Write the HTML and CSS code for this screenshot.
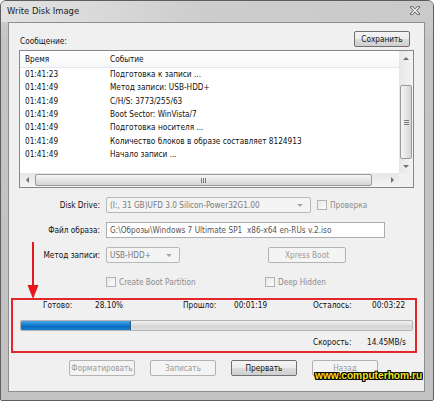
FILE: index.html
```html
<!DOCTYPE html>
<html>
<head>
<meta charset="utf-8">
<title>Write Disk Image</title>
<link rel="stylesheet" href="styles.css">
</head>
<body>
<div class="window">
  <div class="titlebar">
    <span class="title">Write Disk Image</span>
    <svg class="close" width="10" height="9" viewBox="0 0 10 9"><path d="M1.5 1 L8.5 8 M8.5 1 L1.5 8" stroke="#6a6a6a" stroke-width="3" stroke-linecap="round"/><path d="M1.5 1 L8.5 8 M8.5 1 L1.5 8" stroke="#f4f4f4" stroke-width="1.3"/></svg>
  </div>
  <div class="client">
    <div class="msgbar">
      <span class="msg-label">Сообщение:</span>
      <button class="btn save">Сохранить</button>
    </div>
    <div class="list">
      <div class="list-content">
        <div class="list-head"><span class="c1">Время</span><span class="c2">Событие</span></div>
        <div class="row"><span class="c1">01:41:23</span><span class="c2">Подготовка к записи ...</span></div>
        <div class="row"><span class="c1">01:41:49</span><span class="c2">Метод записи: USB-HDD+</span></div>
        <div class="row"><span class="c1">01:41:49</span><span class="c2">C/H/S: 3773/255/63</span></div>
        <div class="row"><span class="c1">01:41:49</span><span class="c2">Boot Sector: WinVista/7</span></div>
        <div class="row"><span class="c1">01:41:49</span><span class="c2">Подготовка носителя ...</span></div>
        <div class="row"><span class="c1">01:41:49</span><span class="c2">Количество блоков в образе составляет 8124913</span></div>
        <div class="row"><span class="c1">01:41:49</span><span class="c2">Начало записи ...</span></div>
      </div>
      <div class="vscroll">
        <div class="sb-arrow"><span class="tri up"></span></div>
        <div class="vtrack"><div class="vthumb"><span class="vgrip"></span></div></div>
        <div class="sb-arrow"><span class="tri down"></span></div>
      </div>
      <div class="hscroll">
        <div class="sb-arrow"><span class="tri left"></span></div>
        <div class="htrack"><div class="hthumb"><span class="hgrip"></span></div></div>
        <div class="sb-arrow"><span class="tri right"></span></div>
      </div>
      <div class="corner"></div>
    </div>

    <div class="form">
      <div class="frow">
        <span class="flabel">Disk Drive:</span>
        <div class="select drive"><span class="sel-text">(I:, 31 GB)UFD 3.0 Silicon-Power32G1.00</span><span class="tri down light"></span></div>
        <span class="check"></span><span class="dis">Проверка</span>
      </div>
      <div class="frow">
        <span class="flabel">Файл образа:</span>
        <div class="input">G:\Оброзы\Windows 7 Ultimate SP1&nbsp; x86-x64 en-RUs v.2.iso</div>
      </div>
      <div class="frow">
        <span class="flabel">Метод записи:</span>
        <div class="select method"><span class="sel-text">USB-HDD+</span><span class="tri down light"></span></div>
        <button class="btn disabled xpress">Xpress Boot</button>
      </div>
      <div class="frow checks">
        <span class="flabel"></span>
        <span class="check"></span><span class="dis cb-text">Create Boot Partition</span>
        <span class="check deep"></span><span class="dis">Deep Hidden</span>
      </div>
    </div>

    <div class="statusbox">
      <div class="srow">
        <span class="s-ready">Готово:</span>
        <span class="s-pct">28.10%</span>
        <span class="s-passed">Прошло:</span>
        <span class="s-time">00:01:19</span>
        <span class="s-left">Осталось:</span>
        <span>00:03:22</span>
      </div>
      <div class="progress"><div class="fill" style="width:28.1%"></div></div>
      <div class="srow speed">
        <span class="s-speed">Скорость:</span>
        <span>14.45MB/s</span>
      </div>
    </div>

    <div class="buttons">
      <button class="btn disabled">Форматировать</button>
      <button class="btn disabled">Записать</button>
      <button class="btn">Прервать</button>
      <button class="btn disabled back">Назад</button>
    </div>
  </div>

  <svg class="arrow" width="12" height="58" viewBox="0 0 12 58"><path d="M6 0 V46" stroke="#e8161e" stroke-width="2"/><path d="M0.5 43 L11.5 43 L6 57 Z" fill="#e8161e"/></svg>
  <div class="watermark">www.computerhom.ru</div>
</div>
</body>
</html>
```

FILE: styles.css
```css
html, body {
  margin: 0;
  padding: 0;
  background: #ffffff;
}

body {
  font-family: "DejaVu Sans Condensed", "DejaVu Sans", sans-serif;
  font-stretch: condensed;
  font-size: 8.2px;
  color: #111;
}

.window {
  position: relative;
  width: 434px;
  height: 401px;
  box-sizing: border-box;
  border: 1px solid #5e5e5e;
  border-radius: 6px 6px 2px 2px;
  background: linear-gradient(to bottom, #d2d2d2, #c4c4c4 40px, #c2c2c2);
  padding: 0 8px 8px 7px;
  display: flex;
  flex-direction: column;
  overflow: hidden;
}

.titlebar {
  height: 21px;
  flex: none;
  display: flex;
  align-items: center;
  justify-content: space-between;
  padding: 0 13px 3px 6px;
  box-sizing: border-box;
  margin: 0 -8px 0 -7px;
  background: linear-gradient(to right, #e2e2e2 0, #dadada 90px, #cdcdcd 200px, #cacaca);
}

.title {
  font-size: 9.4px;
  color: #1a1a1a;
}

.client {
  flex: 1;
  background: #f0f0f0;
  border: 1px solid #8e8e8e;
  display: flex;
  flex-direction: column;
}

.msgbar {
  display: flex;
  justify-content: space-between;
  align-items: flex-end;
  margin: 8px 14px 0 11px;
  height: 16px;
}

.msg-label {
  line-height: 11px;
}

.btn {
  font: inherit;
  font-stretch: condensed;
  color: #111;
  height: 15px;
  padding: 0;
  box-sizing: border-box;
  border: 1px solid #707070;
  border-radius: 2px;
  background: linear-gradient(to bottom, #f4f4f4 0, #ebebeb 50%, #dcdcdc 51%, #cfcfcf 100%);
  line-height: 12px;
  text-align: center;
}

.btn.save {
  width: 56px;
  height: 16px;
}

.btn.disabled {
  color: #9a9a9a;
  border-color: #b3b3b3;
  background: #f4f4f4;
}

/* List view */
.list {
  margin: 3px 10px 0 10px;
  height: 138px;
  box-sizing: border-box;
  border: 1px solid #828790;
  background: #fff;
  display: grid;
  grid-template-columns: 1fr 14px;
  grid-template-rows: 1fr 14px;
}

.list-content {
  overflow: hidden;
}

.list-head {
  height: 17px;
  box-sizing: border-box;
  display: flex;
  align-items: center;
  border-bottom: 1px solid #e4e7ea;
  background: linear-gradient(to bottom, #ffffff, #f7f8f9);
}

.row {
  display: flex;
  height: 13.33px;
  line-height: 13.33px;
  white-space: nowrap;
}

.c1 {
  width: 85px;
  padding-left: 5px;
  box-sizing: border-box;
  flex: none;
}

.c2 {
  padding-left: 5px;
}

.vscroll {
  display: flex;
  flex-direction: column;
  background: linear-gradient(to right, #e6e6e6, #f4f4f4);
}

.hscroll {
  display: flex;
  background: linear-gradient(to bottom, #e6e6e6, #f4f4f4);
}

.corner {
  background: #f0f0f0;
}

.sb-arrow {
  width: 14px;
  height: 14px;
  flex: none;
  display: flex;
  align-items: center;
  justify-content: center;
}

.vtrack {
  flex: 1;
  display: flex;
  flex-direction: column;
}

.vthumb {
  margin: 20px 0 0 1px;
  width: 12px;
  height: 74px;
  box-sizing: border-box;
  border: 1px solid #9a9a9a;
  border-radius: 2px;
  background: linear-gradient(to right, #f5f5f5, #e6e6e6 50%, #d4d4d4);
  display: flex;
  align-items: center;
  justify-content: center;
}

.vgrip {
  width: 5px;
  height: 5px;
  background: repeating-linear-gradient(to bottom, #7a7a7a 0, #7a7a7a 1px, transparent 1px, transparent 2px);
}

.htrack {
  flex: 1;
  display: flex;
}

.hthumb {
  margin: 1px 0 0 1px;
  width: 337px;
  height: 12px;
  box-sizing: border-box;
  border: 1px solid #9a9a9a;
  border-radius: 2px;
  background: linear-gradient(to bottom, #f5f5f5, #e6e6e6 50%, #d4d4d4);
  display: flex;
  align-items: center;
  justify-content: center;
}

.hgrip {
  width: 5px;
  height: 5px;
  background: repeating-linear-gradient(to right, #7a7a7a 0, #7a7a7a 1px, transparent 1px, transparent 2px);
}

.tri {
  width: 0;
  height: 0;
  border-style: solid;
  border-color: transparent;
}

.tri.up {
  border-width: 0 3px 3px 3px;
  border-bottom-color: #707070;
}

.tri.down {
  border-width: 3px 3px 0 3px;
  border-top-color: #707070;
}

.tri.left {
  border-width: 3px 3px 3px 0;
  border-right-color: #707070;
}

.tri.right {
  border-width: 3px 0 3px 3px;
  border-left-color: #707070;
}

.tri.down.light {
  border-top-color: #a8a8a8;
}

/* Form */
.form {
  margin-top: 9px;
  display: flex;
  flex-direction: column;
  gap: 9px;
}

.frow {
  display: flex;
  align-items: center;
  height: 16px;
}

.frow.checks {
  margin-top: 3px;
  height: 14px;
}

.flabel {
  width: 91px;
  margin-right: 6px;
  text-align: right;
  flex: none;
}

.select {
  height: 16px;
  box-sizing: border-box;
  border: 1px solid #b5b9bc;
  border-radius: 2px;
  background: #f4f4f4;
  display: flex;
  align-items: center;
  justify-content: space-between;
  padding: 0 7px 0 3px;
  color: #7a7a7a;
  white-space: nowrap;
  overflow: hidden;
}

.select.drive {
  width: 205px;
}

.select.method {
  width: 74px;
}

.input {
  width: 279px;
  height: 16px;
  box-sizing: border-box;
  border: 1px solid #abadb3;
  background: #fff;
  color: #555;
  padding-left: 3px;
  line-height: 14px;
  white-space: nowrap;
  overflow: hidden;
}

.btn.xpress {
  width: 78px;
  height: 16px;
  margin-left: 88px;
}

.check {
  width: 10px;
  height: 10px;
  box-sizing: border-box;
  border: 1px solid #b3b3b3;
  background: linear-gradient(135deg, #e8e8e8, #fbfbfb);
  flex: none;
  margin-left: 6px;
  margin-right: 3px;
}

.frow.checks .check {
  margin-left: 0;
}

.frow.checks .check.deep {
  margin-left: 58px;
}

.dis {
  color: #8c8c8c;
}

.cb-text {
  width: 88px;
}

/* Status box */
.statusbox {
  margin: 9px 7px 0 2px;
  height: 55px;
  box-sizing: border-box;
  border: 2px solid #e3262c;
}

.srow {
  display: flex;
  line-height: 11px;
  height: 11px;
  padding-left: 30px;
  white-space: nowrap;
}

.s-ready { width: 52px; }
.s-pct { width: 88px; }
.s-passed { width: 51px; }
.s-time { width: 79px; }
.s-left { width: 59px; }

.srow.speed {
  margin-top: 6px;
  padding-left: 300px;
}

.s-speed { width: 54px; }

.progress {
  margin: 9px 2px 0 7px;
  height: 11px;
  box-sizing: border-box;
  border: 1px solid #b2b2b2;
  border-radius: 2px;
  background: linear-gradient(to bottom, #f2f2f2, #dcdcdc 50%, #d2d2d2 51%, #e0e0e0);
  overflow: hidden;
}

.fill {
  height: 100%;
  background: linear-gradient(to bottom, #4fa8e6 0, #1e86d6 35%, #0b6cbf 60%, #1581d2 100%);
  box-shadow: inset -1px 0 0 #2a5d8a;
}

/* Bottom buttons */
.buttons {
  display: flex;
  gap: 15px;
  margin-top: 7px;
  padding-left: 60px;
}

.buttons .btn {
  width: 66px;
  height: 16px;
}

.buttons .btn.back {
  line-height: 8px;
}

/* Overlays */
.arrow {
  position: absolute;
  left: 26px;
  top: 241px;
}

.watermark {
  position: absolute;
  left: 314px;
  top: 369px;
  font-family: "Liberation Sans", Arial, sans-serif;
  font-stretch: normal;
  font-weight: bold;
  font-size: 10.2px;
  line-height: 12px;
  color: #f0e31a;
  text-shadow: 1px 0 0 #000, -1px 0 0 #000, 0 1px 0 #000, 0 -1px 0 #000, 1px 1px 0 #000, -1px -1px 0 #000, 1px -1px 0 #000, -1px 1px 0 #000;
  white-space: nowrap;
}
```
